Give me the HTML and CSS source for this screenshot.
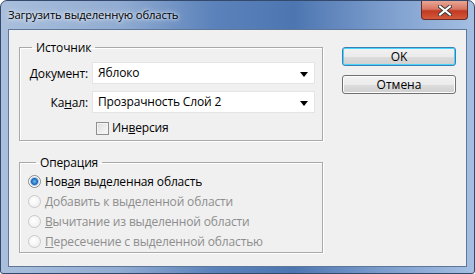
FILE: index.html
```html
<!DOCTYPE html>
<html lang="ru">
<head>
    <meta charset="UTF-8">
    <title>Загрузить выделенную область</title>
    <link rel="stylesheet" href="styles.css">
</head>
<body>
<div class="window">
    <div class="titlebar">
        <span class="title">Загрузить выделенную область</span>
        <button type="button" class="close" aria-label="Закрыть">
            <svg width="14" height="11" viewBox="0 0 14 11">
                <path d="M2 1.5 L12 9.5 M12 1.5 L2 9.5" stroke="#3b3b3b" stroke-width="4" stroke-linecap="square"/>
                <path d="M2 1.5 L12 9.5 M12 1.5 L2 9.5" stroke="#fff" stroke-width="2" stroke-linecap="square"/>
            </svg>
        </button>
    </div>
    <div class="dialog">
        <div class="groups">
            <fieldset class="group source">
                <legend>Источник</legend>
                <div class="fields">
                    <label><u>Д</u>окумент:</label>
                    <div class="select">Яблоко<span class="arrow"></span></div>
                    <label>Ка<u>н</u>ал:</label>
                    <div class="select">Прозрачность Слой 2<span class="arrow"></span></div>
                    <span></span>
                    <div class="check"><span class="box"></span><span>Ин<u>в</u>ерсия</span></div>
                </div>
            </fieldset>
            <fieldset class="group operation">
                <legend>Операция</legend>
                <div class="radio checked"><span class="dot"></span><span>Нов<u>а</u>я выделенная область</span></div>
                <div class="radio disabled"><span class="dot"></span><span><u>Д</u>обавить к выделенной области</span></div>
                <div class="radio disabled"><span class="dot"></span><span><u>В</u>ычитание из выделенной области</span></div>
                <div class="radio disabled"><span class="dot"></span><span><u>П</u>ересечение с выделенной областью</span></div>
            </fieldset>
        </div>
        <div class="buttons">
            <button type="button" class="btn default">OK</button>
            <button type="button" class="btn">Отмена</button>
        </div>
    </div>
</div>
</body>
</html>
```
FILE: styles.css
```css
body {
    margin: 0;
    background: #fff;
    font-family: "Open Sans", "Noto Sans", sans-serif;
    font-size: 12px;
    letter-spacing: -0.15px;
    color: #000;
}
.window {
    width: 475px;
    height: 274px;
    box-sizing: border-box;
    padding: 0 7px 7px 7px;
    border: 1px solid #34496b;
    border-radius: 7px 7px 3px 3px;
    background: linear-gradient(to right, #a9bfdc 0%, #91acd2 25%, #5b82ba 45%, #4d76b1 62%, #7e9fce 82%, #a4bfe2 100%);
}
.titlebar {
    height: 28px;
    display: flex;
    justify-content: space-between;
    align-items: flex-start;
}
.title {
    margin-top: 6px;
    font-size: 11.3px;
    line-height: 16px;
    text-shadow: 0 0 6px #eef3fa, 0 0 3px #eef3fa;
}
.close {
    width: 47px;
    height: 19px;
    margin-right: -1px;
    padding: 0;
    border: 1px solid #6b2a22;
    border-top: none;
    border-radius: 0 0 4px 4px;
    background: linear-gradient(#e8a595 0%, #d77762 45%, #c23a22 55%, #d35a3c 100%);
    display: flex;
    align-items: center;
    justify-content: center;
}
.dialog {
    height: 238px;
    box-sizing: border-box;
    border: 1px solid #5f7698;
    background: #f0f0f0;
    display: flex;
    padding: 10px 0 0 10px;
}
.groups {
    width: 304px;
    display: flex;
    flex-direction: column;
    gap: 14px;
}
.group {
    margin: 0;
    border: 1px solid #a9a9a9;
    box-shadow: inset 1px 1px 0 #fff, 1px 1px 0 #fff;
    border-radius: 0;
}
.group legend {
    margin-left: 8px;
    padding: 0 4px;
    line-height: 15px;
}
.source {
    padding: 7px 7px 4px 4px;
}
.fields {
    display: grid;
    grid-template-columns: 64px 1fr;
    column-gap: 4px;
    row-gap: 7px;
    align-items: center;
}
.fields label {
    text-align: right;
}
.select {
    position: relative;
    height: 22px;
    box-sizing: border-box;
    border: 1px solid #e4e4e4;
    background: #fff;
    padding-left: 5px;
    line-height: 20px;
}
.arrow {
    position: absolute;
    right: 6px;
    top: 9px;
    border-left: 4px solid transparent;
    border-right: 4px solid transparent;
    border-top: 5px solid #000;
}
.check {
    display: flex;
    align-items: center;
    gap: 3px;
    margin-left: 4px;
    line-height: 16px;
}
.box {
    width: 11px;
    height: 11px;
    border: 1px solid #8e8f8f;
    background: linear-gradient(135deg, #dcdcdc, #fbfbfb);
    box-shadow: inset 0 0 0 1px #f4f4f4;
}
.operation {
    padding: 1px 7px 1px 8px;
}
.radio {
    height: 20px;
    display: flex;
    align-items: center;
    gap: 4px;
}
.dot {
    width: 11px;
    height: 11px;
    border-radius: 50%;
    border: 1px solid #c9c9c9;
    background: radial-gradient(circle at 40% 40%, #fff, #ebebeb);
}
.checked .dot {
    border-color: #8a8a8a;
    background: radial-gradient(circle, #6cc1f4 0, #1c63b6 3px, #aac9e6 4px, #fff 5px, #e4e4e4 100%);
}
.disabled {
    color: #8d8d8d;
}
.buttons {
    margin-left: 19px;
    padding-top: 7px;
    display: flex;
    flex-direction: column;
    gap: 9px;
}
.btn {
    width: 114px;
    height: 19px;
    padding: 0;
    font: inherit;
    border: 1px solid #707070;
    border-radius: 3px;
    background: linear-gradient(#f2f2f2 0%, #ebebeb 50%, #dddddd 51%, #cfcfcf 100%);
    box-shadow: inset 0 0 0 1px #fcfcfc;
}
.btn.default {
    border-color: #3c7fb1;
    box-shadow: inset 0 0 0 1px #48d5fd;
}
```
